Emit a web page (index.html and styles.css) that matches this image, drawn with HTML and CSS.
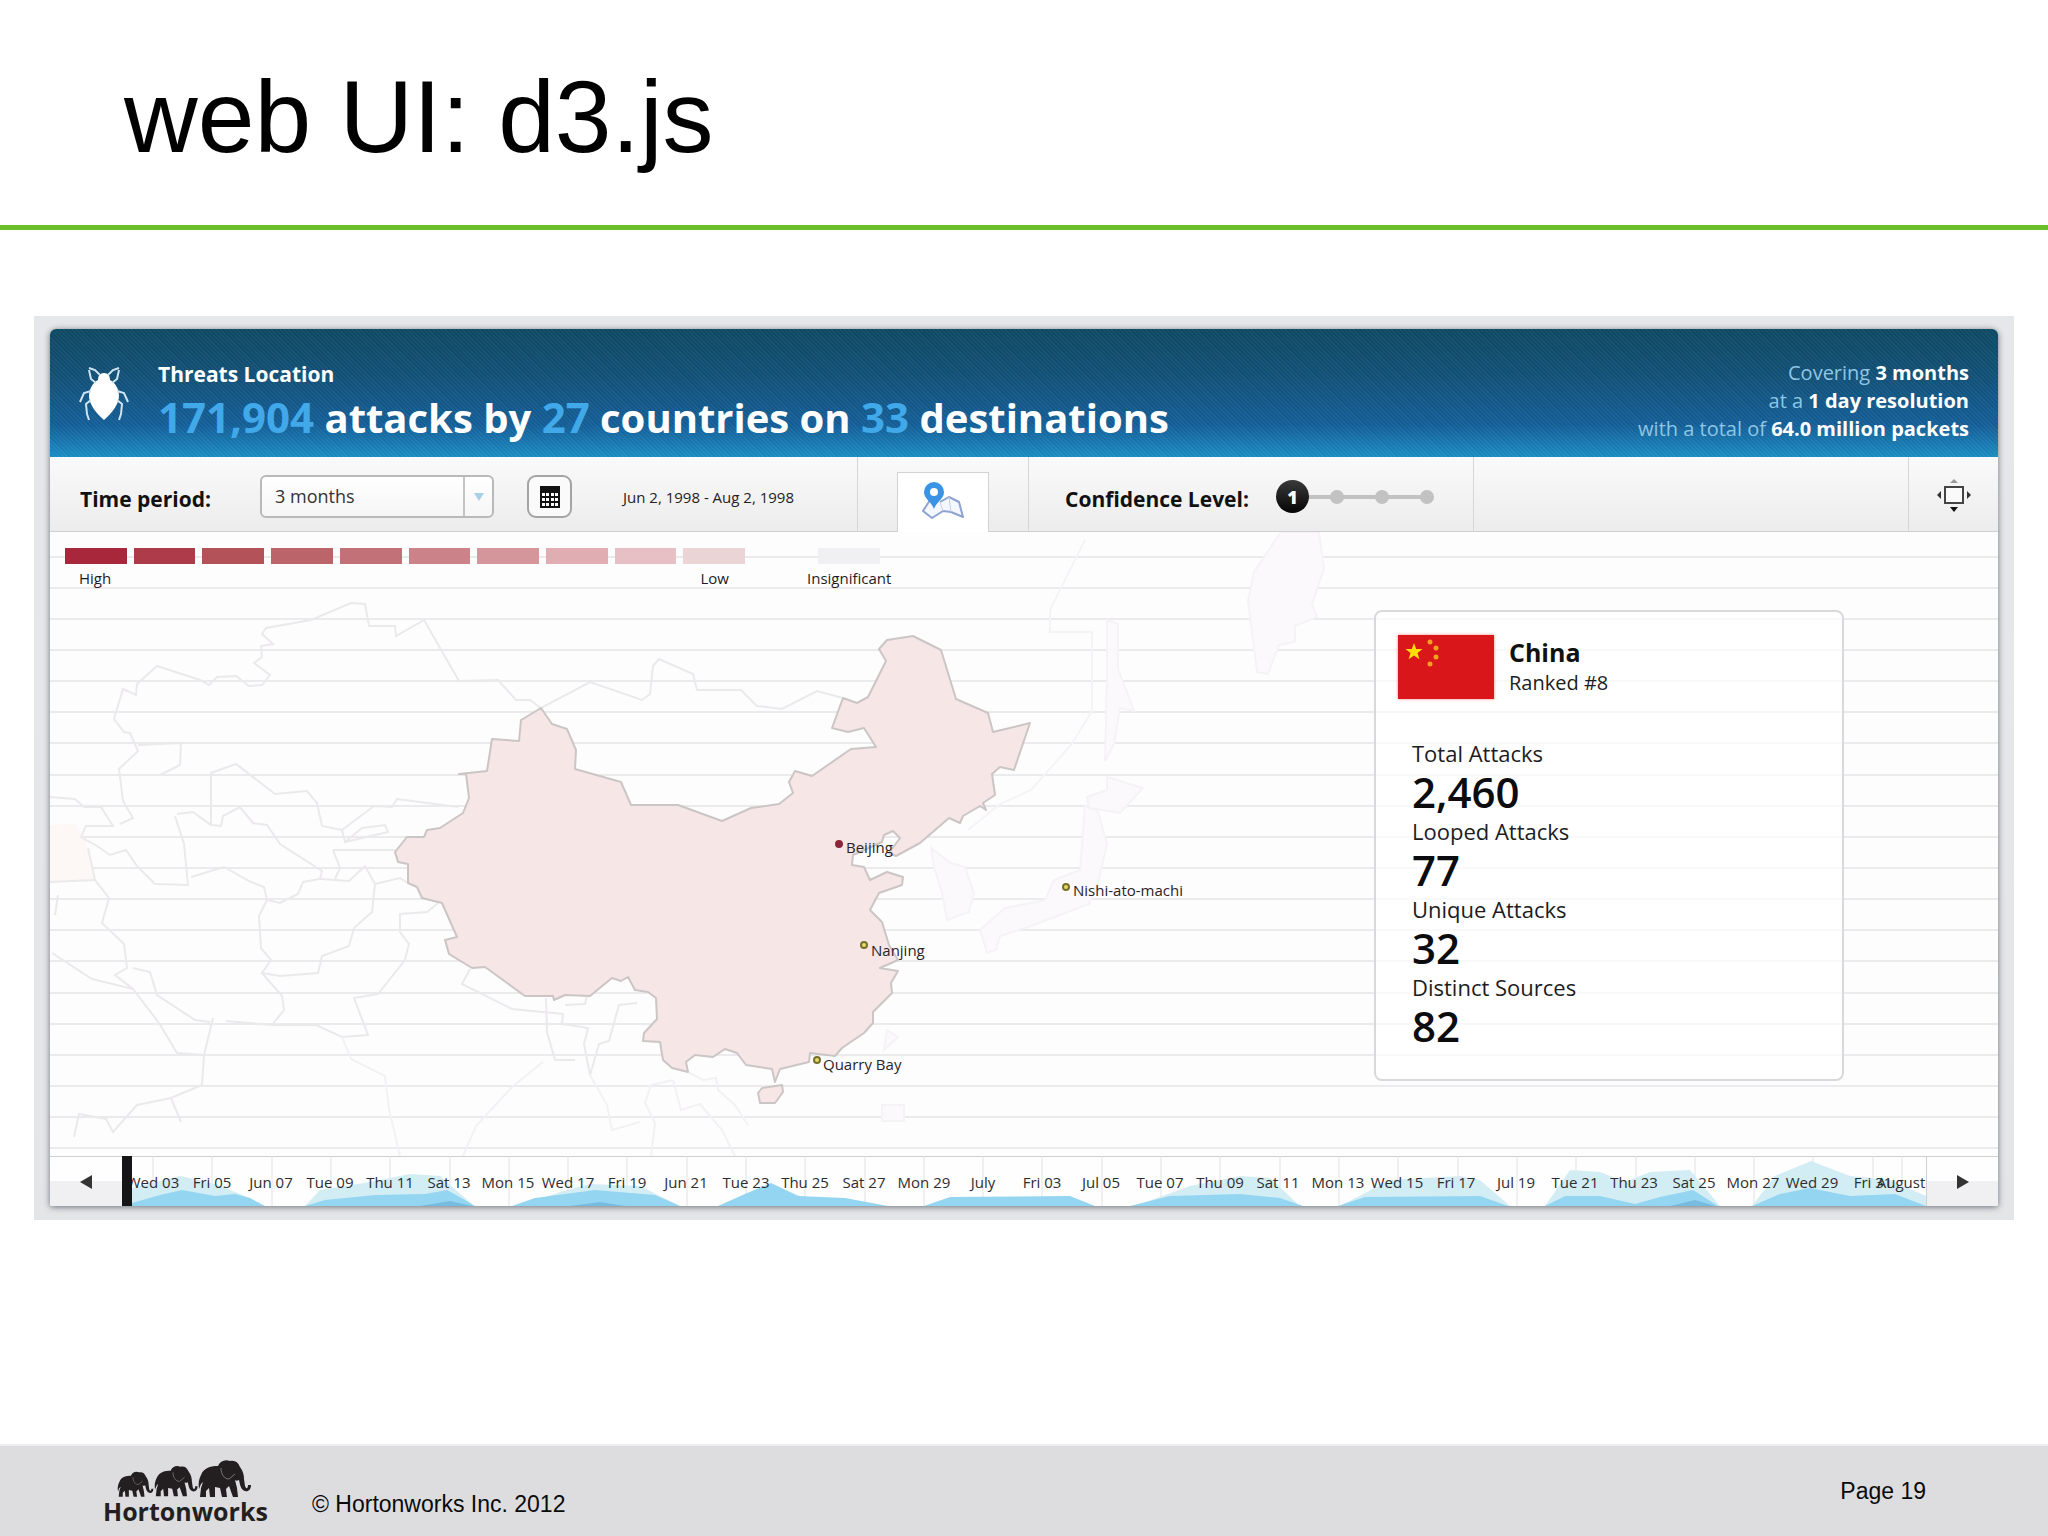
FILE: index.html
```html
<!DOCTYPE html>
<html lang="en">
<head>
<meta charset="utf-8">
<meta name="viewport" content="width=device-width, initial-scale=1">
<title>web UI: d3.js</title>
<link rel="stylesheet" href="styles.css">
</head>
<body>
<header class="slide-title">
  <h1>web UI: d3.js</h1>
</header>

<main class="stage">
  <section class="panel">
    <div class="banner">
      <svg class="bug" viewBox="0 0 50 56" aria-hidden="true">
        <path d="M25 7c4 0 6 3 6 7 6 3 9 10 9 16 0 8-7 17-15 24-8-7-15-16-15-24 0-6 3-13 9-16 0-4 2-7 6-7z" fill="#fff"/>
        <path d="M21 9 16 4 10 2M29 9l5-5 6-2M17 17l-5-4-2-9M33 17l5-4 2-9M12 25l-7 2-4 9M38 25l7 2 4 9M12 34l-5 4 1 10 2 6M38 34l5 4-1 10-2 6" fill="none" stroke="#cfe4f0" stroke-width="2"/>
      </svg>
      <div class="headline">
        <h2>Threats Location</h2>
        <p><em>171,904</em> attacks by <em>27</em> countries on <em>33</em> destinations</p>
      </div>
      <p class="coverage">Covering <b>3 months</b><br>at a <b>1 day resolution</b><br>with a total of <b>64.0 million packets</b></p>
    </div>

    <div class="toolbar">
      <div class="period">
        <label for="period">Time period:</label>
        <div class="select">
          <select id="period"><option>3 months</option></select>
          <span class="arrow"></span>
        </div>
        <button class="calendar" type="button" aria-label="Pick dates">
          <svg viewBox="0 0 20 22" width="20" height="22"><path d="M0 0h20v22H0z" fill="#111"/><path d="M2 7h3v3H2zM6 7h3v3H6zM11 7h3v3h-3zM15 7h3v3h-3zM2 12h3v3H2zM6 12h3v3H6zM11 12h3v3h-3zM15 12h3v3h-3zM2 17h3v3H2zM6 17h3v3H6zM11 17h3v3h-3zM15 17h3v3h-3z" fill="#fff"/></svg>
        </button>
        <span class="range">Jun 2, 1998 - Aug 2, 1998</span>
      </div>
      <div class="tabs">
        <button class="tab" type="button" aria-label="Map view">
          <svg viewBox="0 0 44 40" width="44" height="40">
            <path d="M9 19 2 30l9 7 11-7 8 1 12 5-4-15-10-5-9 5" fill="#f4f7fd" stroke="#8fa3d0" stroke-width="2" stroke-linejoin="round"/>
            <path d="m22 30-3-9M30 31l-2-15" stroke="#c3cfe8" stroke-width="1"/>
            <path d="M13 1a10 10 0 0 1 10 10c0 7-7 9-10 17C10 20 3 18 3 11A10 10 0 0 1 13 1z" fill="#3b93e6"/>
            <circle cx="13" cy="11" r="4" fill="#fff"/>
          </svg>
        </button>
      </div>
      <div class="confidence">
        <label for="confidence">Confidence Level:</label>
        <div class="slider">
          <svg viewBox="0 0 158 34" width="158" height="34" aria-hidden="true"><g fill="#c2c2c2"><path d="M16 15h135v4H16z"/><circle cx="61" cy="17" r="7"/><circle cx="106" cy="17" r="7"/><circle cx="151" cy="17" r="7"/></g></svg>
          <input id="confidence" type="range" min="1" max="4" value="1">
          <output for="confidence">1</output>
        </div>
      </div>
      <div class="spacer"></div>
      <button class="expand" type="button" aria-label="Full screen">
        <svg viewBox="0 0 36 34" width="36" height="34"><rect x="9" y="9" width="18" height="16" fill="#fafafa" stroke="#444" stroke-width="2"/><path d="M14 5h8l-4-4z" fill="#999"/><path d="m5 13-4 4 4 4zM31 13l4 4-4 4z" fill="#333"/><path d="M14 29h8l-4 5z" fill="#111"/></svg>
      </button>
    </div>

    <div class="map-area">
      <svg class="map" viewBox="50 532 1948 624" role="img" aria-label="Map of Asia">
        <path class="rules" d="M50 557h1948M50 588h1948M50 619h1948M50 650h1948M50 681h1948M50 712h1948M50 743h1948M50 775h1948M50 806h1948M50 837h1948M50 868h1948M50 899h1948M50 930h1948M50 961h1948M50 993h1948M50 1024h1948M50 1055h1948M50 1086h1948M50 1117h1948M50 1148h1948"/>
        <path d="M50 825 75 823 85 840 88 848 95 880 50 882z" fill="#fdf8f5"/>
        <g class="borders">
          <path d="M424 620 396 636 395 626 369 626 365 604 351 603 311 620 266 628 262 634 273 644 261 646 262 657 254 663 270 675 262 685 249 686 236 676 217 677 209 685 200 680 157 666 137 684 136 695 123 689 114 719 124 732 130 733 138 751 119 769 123 801 133 818 120 824"/>
          <path d="M138 745 181 743 180 765 160 775"/>
          <path d="M424 620 459 681 498 680 516 700 530 700 541 708 590 682 642 700 650 694 653 666 659 659 693 674 697 690 741 690 757 706 782 709 817 691 843 698"/>
          <path d="M211 825 211 773 236 764 275 794 307 791 317 803 322 826 342 830 374 806 392 807 397 799 458 807"/>
          <path d="M177 814 193 812 211 825 221 826 223 816 240 807 253 823 267 825 280 844 322 871 320 879 303 882 298 894 280 903 267 900 264 887 251 882 224 867 191 877"/>
          <path d="M342 830 345 842 362 828 385 825 388 832 345 842M333 850 398 850M333 850 340 868 335 879"/>
          <path d="M267 900 259 916 261 948 271 960 262 973 280 976 318 973 322 956 349 946 354 928 372 912 375 884 365 866 349 881 320 879M375 884 400 878 408 883"/>
          <path d="M262 973 282 996 284 1010 272 1025M226 1021 272 1025 316 1025 342 1037 368 1035 354 998 378 994 405 960 409 944 400 932 400 914 427 912 438 903"/>
          <path d="M88 848 95 880 109 898 102 923 124 944 127 968 115 975 133 989 159 1023 177 1053 204 1055 213 1018M204 1055 202 1085 171 1098 137 1105 113 1132 106 1119 79 1114 74 1137M171 1098 181 1122M52 953 92 979 133 989"/>
          <path d="M50 797 75 799 84 807 101 807 113 826 86 826 81 837 97 846 110 855 126 850 137 866 155 884 188 885 184 844 175 816"/>
          <path d="M50 882 95 880M58 895 55 915"/>
          <path d="M133 968 150 972 157 995 195 1020 210 1022"/>
          <path d="M470 969 462 984 512 1009 563 1014 562 1024 588 1028 584 1044 590 1075 599 1044 609 1041 619 1005 637 1003M546 998 547 1032 555 1060 575 1060M565 1005 585 1004 587 996"/>
        </g>
        <g class="borders faint">
          <path d="M342 1037 351 1059 385 1076 389 1109 400 1156M543 1062 512 1087 476 1126 463 1156"/>
          <path d="M673 1080 651 1085 645 1103 655 1123 651 1156M590 1075 607 1105 612 1130 640 1122M673 1080 681 1110 700 1104 722 1130 735 1156M688 1072 703 1080 716 1078 718 1090 735 1105 748 1125"/>
        </g>
        <g class="islands">
          <path d="M1281 532 1254 572 1248 601 1257 672 1268 674 1279 645 1295 642 1295 626 1317 617 1312 604 1324 569 1319 532z"/>
          <path d="M1107 620 1118 624 1118 669 1134 711 1120 708 1114 744 1105 761 1107 676z"/>
          <path d="M1107 777 1143 788 1120 813 1089 808 1087 797 1107 790z"/>
          <path d="M1085 806 1098 811 1107 844 1098 883 1089 904 1031 926 1000 936 996 950 987 953 980 930 1005 908 1045 900 1054 880 1080 870z"/>
          <path d="M931 848 951 863 965 867 974 893 969 912 947 920 942 893 934 867z"/>
          <path d="M887 1030 898 1037 884 1050zM882 1105h22v16h-22z"/>
          <path d="M1085 540 1050 610 1050 632 1092 632 1092 711 1071 745 1031 790 1000 804 968 830" fill="none"/>
        </g>
        <path class="china" d="M541 708 552 724 567 729 576 750 575 769 621 782 631 805 678 805 722 821 751 808 779 804 793 793 789 782 795 771 812 776 851 749 876 747 864 728 848 732 832 728 843 698 857 703 868 697 886 661 879 649 887 640 913 636 941 650 956 699 988 713 993 732 1030 723 1014 770 1000 767 992 774 995 795 983 803 986 810 980 806 963 816 960 823 949 818 920 843 896 856 889 853 900 838 893 831 884 835 882 842 853 855 852 865 864 867 870 880 887 872 903 877 902 885 879 893 870 910 882 922 889 945 898 960 880 968 898 971 891 983 892 993 873 1012 873 1023 864 1033 842 1048 835 1056 810 1053 809 1062 780 1069 775 1082 772 1069 746 1065 737 1053 725 1049 713 1057 695 1055 686 1062 688 1072 672 1068 663 1060 660 1042 643 1041 644 1033 657 1019 656 998 648 992 635 990 628 977 621 981 612 978 590 996 565 995 554 1000 553 996 525 996 485 967 472 968 449 954 445 940 457 937 442 903 422 898 417 887 408 883 408 864 398 862 395 852 407 837 424 837 427 830 440 828 463 813 469 798 466 774 459 774 487 771 492 739 519 741 521 720zM762 1088 782 1085 783 1092 775 1103 760 1103 758 1093z"/>
        <g class="cities">
          <circle class="hot" cx="839" cy="844" r="3"/><text x="846" y="853">Beijing</text>
          <circle cx="1066" cy="887" r="3"/><text x="1073" y="896">Nishi-ato-machi</text>
          <circle cx="864" cy="945" r="3"/><text x="871" y="956">Nanjing</text>
          <circle cx="817" cy="1060" r="3"/><text x="823" y="1070">Quarry Bay</text>
        </g>
      </svg>

      <div class="overlay">
        <div class="legend">
          <div class="scale">
            <div class="swatches"><i class="s1"></i><i class="s2"></i><i class="s3"></i><i class="s4"></i><i class="s5"></i><i class="s6"></i><i class="s7"></i><i class="s8"></i><i class="s9"></i><i class="s10"></i></div>
            <div class="ends"><span>High</span><span>Low</span></div>
          </div>
          <div class="none"><i></i><span>Insignificant</span></div>
        </div>

        <aside class="card">
          <div class="country">
            <svg class="flag" viewBox="0 0 96 64" aria-hidden="true"><path d="M0 0h96v64H0z" fill="#d9171b"/><path d="m16 8 2.200 6h6.300l-5 4 1.900 6.200-5.400-3.700-5.400 3.700 1.900-6.200-5-4h6.300z" fill="#ffde00"/><g fill="#f3a21c"><circle cx="32" cy="7" r="2.500"/><circle cx="38" cy="13" r="2.500"/><circle cx="38" cy="22" r="2.500"/><circle cx="32" cy="29" r="2.500"/></g></svg>
            <div><h3>China</h3><p>Ranked #8</p></div>
          </div>
          <dl>
            <dt>Total Attacks</dt><dd>2,460</dd>
            <dt>Looped Attacks</dt><dd>77</dd>
            <dt>Unique Attacks</dt><dd>32</dd>
            <dt>Distinct Sources</dt><dd>82</dd>
          </dl>
        </aside>
      </div>
    </div>

    <div class="timeline">
      <button type="button" class="prev" aria-label="Earlier"><svg viewBox="0 0 12 14" width="12" height="14"><path d="M12 0v14L0 7z"/></svg></button>
      <svg class="strip" viewBox="122 1156 1804 50" role="img" aria-label="Attacks per day">
        <path class="ticks" d="M153 1156v50M212 1156v50M272 1156v50M331 1156v50M390 1156v50M450 1156v50M509 1156v50M568 1156v50M627 1156v50M687 1156v50M746 1156v50M805 1156v50M865 1156v50M924 1156v50M983 1156v50M1042 1156v50M1102 1156v50M1161 1156v50M1220 1156v50M1280 1156v50M1339 1156v50M1398 1156v50M1458 1156v50M1517 1156v50M1576 1156v50M1636 1156v50M1695 1156v50M1754 1156v50M1813 1156v50M1873 1156v50M1902 1156v50"/>
        <path class="wave-light" d="M132 1206V1188L180 1176 215 1184 245 1196 262 1206zM305 1206 320 1190 370 1182 410 1174 440 1176 474 1206zM520 1206 560 1192 590 1184 640 1186 680 1206zM720 1206 755 1190 772 1184 800 1196 880 1206zM1135 1206 1190 1186 1240 1176 1270 1178 1300 1206zM1340 1206 1390 1180 1460 1176 1480 1180 1510 1206zM1545 1206 1570 1170 1600 1172 1625 1182 1650 1172 1690 1170 1720 1206zM1752 1206 1775 1176 1811 1161 1850 1176 1890 1180 1926 1196V1206z"/>
        <path class="wave" d="M132 1203 160 1195 182 1190 215 1196 235 1194 250 1198 265 1206H132zM305 1206 325 1200 345 1198 375 1195 425 1194 447 1190 465 1200 475 1206zM512 1206 535 1198 595 1190 655 1195 680 1206zM718 1206 745 1194 771 1183 798 1196 845 1198 888 1206zM924 1206 950 1197 1070 1196 1095 1206zM1130 1206 1170 1196 1240 1194 1280 1198 1303 1206zM1338 1206 1365 1197 1480 1196 1508 1206zM1545 1206 1565 1196 1600 1196 1635 1204 1660 1197 1693 1190 1718 1206zM1752 1206 1780 1194 1810 1188 1850 1196 1895 1194 1926 1206z"/>
        <path class="wave-dark" d="M420 1206 450 1201 472 1206zM570 1206 600 1202 625 1206zM1670 1206 1695 1200 1715 1206z"/>
        <g class="days">
          <text x="153" y="1188">Wed 03</text><text x="212" y="1188">Fri 05</text><text x="271" y="1188">Jun 07</text><text x="330" y="1188">Tue 09</text><text x="390" y="1188">Thu 11</text><text x="449" y="1188">Sat 13</text><text x="508" y="1188">Mon 15</text><text x="568" y="1188">Wed 17</text><text x="627" y="1188">Fri 19</text><text x="686" y="1188">Jun 21</text><text x="746" y="1188">Tue 23</text><text x="805" y="1188">Thu 25</text><text x="864" y="1188">Sat 27</text><text x="924" y="1188">Mon 29</text><text x="983" y="1188">July</text><text x="1042" y="1188">Fri 03</text><text x="1101" y="1188">Jul 05</text><text x="1160" y="1188">Tue 07</text><text x="1220" y="1188">Thu 09</text><text x="1278" y="1188">Sat 11</text><text x="1338" y="1188">Mon 13</text><text x="1397" y="1188">Wed 15</text><text x="1456" y="1188">Fri 17</text><text x="1516" y="1188">Jul 19</text><text x="1575" y="1188">Tue 21</text><text x="1634" y="1188">Thu 23</text><text x="1694" y="1188">Sat 25</text><text x="1753" y="1188">Mon 27</text><text x="1812" y="1188">Wed 29</text><text x="1873" y="1188">Fri 31</text><text x="1901" y="1188">August</text>
        </g>
        <path d="M122 1156h10v50h-10z" fill="#151518"/>
      </svg>
      <button type="button" class="next" aria-label="Later"><svg viewBox="0 0 12 14" width="12" height="14"><path d="M0 0v14l12-7z"/></svg></button>
    </div>
  </section>
</main>

<footer class="slide-footer">
  <div class="logo">
    <svg viewBox="0 0 136 40" width="136" height="40" aria-hidden="true">
      <defs>
        <g id="elephant">
          <path d="M2 16C5 8 13 7 19 7c2-5 7-7 12-5 5-1 8 1 10 6 3 4 4 8 4 12l1 7c1 3 3 3 3-1h3c0 5-3 7-6 6-4-1-5-6-6-11-2 1-3 1-4 0l2 8 1 9h-5l-4-11-3 3 1 8h-5l-2-9-5-1v10h-5l-1-9-3 3v6H1l1-9 2-6-2 2-2 5c-1-6 0-10 2-14z"/>
          <path d="M22 9c0 6 3 11 8 11l6-5" fill="none" stroke="#77777b" stroke-width="1"/>
        </g>
      </defs>
      <g fill="#231f20">
        <use href="#elephant" transform="translate(1 13) scale(.68)"/>
        <use href="#elephant" transform="translate(38 7) scale(.82)"/>
        <use href="#elephant" transform="translate(82 1)"/>
      </g>
    </svg>
    <strong>Hortonworks</strong>
  </div>
  <span class="copyright">© Hortonworks Inc. 2012</span>
  <span class="page-number">Page 19</span>
</footer>
</body>
</html>
```
FILE: styles.css
```css
* { box-sizing: border-box; }
body {
  margin: 0;
  min-height: 100vh;
  display: flex;
  flex-direction: column;
  background: #fff;
  color: #1c1c1e;
  font-family: "Open Sans", "Noto Sans", sans-serif;
}
h1, h2, h3, p, dl, dd { margin: 0; }
button { font: inherit; cursor: pointer; }

.slide-title {
  padding: 58px 124px 49px;
  border-bottom: 5px solid #6abf2b;
}
.slide-title h1 {
  font: 102px/118px "Liberation Sans", Arial, sans-serif;
  color: #000;
}

.stage {
  margin: 86px 34px 60px;
  padding: 13px 16px 14px;
  background: linear-gradient(#e6e7ea, #e3e5e7);
}
.panel {
  border-radius: 6px 6px 2px 2px;
  box-shadow: 0 1px 6px #6b7076;
  overflow: hidden;
  background: #fefefe;
}

.banner {
  display: flex;
  align-items: flex-start;
  height: 128px;
  padding: 30px 29px 0;
  color: #fff;
  background:
    repeating-linear-gradient(45deg, #ffffff0a 0 1px, #0000000a 2px 3px),
    linear-gradient(#0e4a64, #125178 35%, #14609a 75%, #1b8fc6);
}
.bug { width: 50px; height: 56px; margin-top: 7px; }
.headline { margin-left: 29px; }
.headline h2 { font-size: 21px; line-height: 30px; font-weight: 700; }
.headline p { font-size: 40px; line-height: 58px; font-weight: 700; }
.headline em { font-style: normal; font-size: 42px; line-height: 48px; color: #41a8ea; }
.coverage {
  margin-left: auto;
  text-align: right;
  font-size: 20px;
  line-height: 28px;
  color: #8fc6e3;
}
.coverage b { color: #fff; }

.toolbar {
  display: flex;
  height: 75px;
  background: linear-gradient(#fafafa, #ececed);
  box-shadow: inset 0 -1px #cfcfd1;
}
.toolbar label { padding-top: 4px; font-size: 21px; font-weight: 700; color: #111; }
.period {
  display: flex;
  align-items: center;
  width: 808px;
  padding: 4px 0 0 30px;
  border-right: 1px solid #d6d6d8;
}
.period label { width: 180px; }
.select {
  position: relative;
  width: 234px;
  height: 43px;
}
.select select {
  appearance: none;
  width: 100%;
  height: 100%;
  padding: 0 44px 2px 13px;
  border: 2px solid #b9b9bc;
  border-radius: 6px;
  background: linear-gradient(#fff, #f6f6f7);
  font: 18px/24px "Open Sans", sans-serif;
  color: #333;
}
.select .arrow {
  position: absolute;
  inset: 2px 2px 2px auto;
  width: 29px;
  border-left: 2px solid #c4c4c6;
  display: grid;
  place-items: center;
  pointer-events: none;
}
.select .arrow::after {
  content: "";
  border: 5px solid transparent;
  border-top: 8px solid #a9cfe9;
  border-bottom: 0;
}
.calendar {
  display: grid;
  place-items: center;
  width: 45px;
  height: 43px;
  margin-left: 33px;
  padding: 0;
  border: 2px solid #a4a4a7;
  border-radius: 9px;
  background: #fafafa;
}
.range { margin-left: 51px; font-size: 15px; color: #222; white-space: nowrap; }
.tabs {
  display: flex;
  justify-content: center;
  align-items: flex-end;
  width: 171px;
  border-right: 1px solid #d6d6d8;
}
.tab {
  width: 92px;
  height: 60px;
  padding: 2px 0 0;
  border: 1px solid #d2d2d4;
  border-bottom: 0;
  background: #fff;
}
.confidence {
  display: flex;
  align-items: center;
  width: 445px;
  padding: 4px 0 0 36px;
  border-right: 1px solid #d6d6d8;
}
.confidence label { width: 211px; }
.slider { position: relative; width: 158px; height: 34px; }
.slider svg { display: block; }
.slider input {
  position: absolute;
  inset: 0;
  width: 158px;
  height: 34px;
  margin: 0;
  appearance: none;
  background: none;
}
.slider input::-webkit-slider-thumb {
  appearance: none;
  width: 33px;
  height: 33px;
  border-radius: 50%;
  background: linear-gradient(#3a3a3a, #050505);
}
.slider output {
  position: absolute;
  left: 0;
  top: 0;
  width: 33px;
  font-size: 18px;
  line-height: 34px;
  font-weight: 800;
  text-align: center;
  color: #fff;
  pointer-events: none;
}
.spacer { flex: 1; }
.expand {
  width: 90px;
  padding: 6px 0 0;
  border: 0;
  border-left: 1px solid #d6d6d8;
  background: none;
}

.map-area { display: grid; }
.map { grid-area: 1 / 1; display: block; width: 100%; background: #fefdfe; }
.rules { stroke: #ebeaec; stroke-width: 2; }
.borders { fill: none; stroke: #ebe9ec; stroke-width: 2; }
.faint { stroke: #f3f1f4; }
.islands { fill: #fbf9fb; stroke: #f5f3f6; stroke-width: 2; }
.china { fill: #f6e6e6; stroke: #cbc6c5; stroke-width: 2; stroke-linejoin: round; }
.cities text { font-size: 15px; fill: #2b2226; }
.cities circle { fill: #e4dc6a; stroke: #77702a; stroke-width: 2; }
.cities .hot { fill: #8c2638; stroke: #8c2638; }

.overlay {
  grid-area: 1 / 1;
  display: flex;
  justify-content: space-between;
  align-items: flex-start;
  padding: 16px 154px 0 15px;
}
.legend { display: flex; gap: 62px; font-size: 15px; line-height: 20px; }
.scale { width: 680px; }
.swatches { display: grid; grid-template-columns: repeat(10, 1fr); gap: 7px; }
.swatches i, .none i { height: 16px; }
.ends { display: flex; justify-content: space-between; padding: 4px 16px 0 14px; }
.none { display: grid; justify-items: center; gap: 4px; }
.none i { width: 62px; background: #f0eff1; }
.s1 { background: #a9273a; }
.s2 { background: #ae3b4a; }
.s3 { background: #b45259; }
.s4 { background: #bb656b; }
.s5 { background: #c27179; }
.s6 { background: #cb8389; }
.s7 { background: #d4969b; }
.s8 { background: #dfadb2; }
.s9 { background: #e6c0c4; }
.s10 { background: #ebd4d6; }

.card {
  width: 470px;
  margin-top: 62px;
  padding: 23px 22px 29px;
  border: 2px solid #d9d8db;
  border-radius: 8px;
  background: #ffffffb0;
}
.country { display: flex; align-items: center; gap: 15px; }
.flag { width: 96px; height: 64px; box-shadow: 0 0 3px #e88; }
.country h3 { font-size: 25px; line-height: 32px; color: #111; }
.country p { font-size: 20px; line-height: 30px; }
.card dl { margin: 39px 0 0 14px; }
.card dt { font-size: 22px; line-height: 30px; }
.card dd { font-size: 42px; line-height: 48px; font-weight: 600; color: #0c0c0e; }

.timeline { display: flex; align-items: stretch; box-shadow: inset 0 1px #d0d0d2; }
.timeline button {
  flex: 0 0 72px;
  padding: 4px 0 0;
  border: 0;
  background: linear-gradient(transparent 50%, #f0f0f2 50%);
  fill: #333;
}
.timeline .next { border-left: 1px solid #d0d0d2; }
.strip { flex: 1; min-width: 0; display: block; }
.ticks { stroke: #e2e2e5; stroke-width: 1; }
.wave-light { fill: #d3edf5; }
.wave { fill: #94d6f1; }
.wave-dark { fill: #78bbe0; }
.days text { font-size: 15px; text-anchor: middle; fill: #2d2d31; }

.slide-footer {
  display: flex;
  align-items: flex-start;
  margin-top: auto;
  height: 92px;
  padding: 0 122px 0 103px;
  border-top: 2px solid #eeeef0;
  background: #dddde0;
  color: #0a0a0a;
  font: 23px/28px "Liberation Sans", Arial, sans-serif;
}
.logo { display: grid; justify-items: center; width: 163px; padding-top: 12px; color: #231f20; }
.logo strong { font: 700 25px/26px "Open Sans", sans-serif; }
.copyright { margin: 44px 0 0 46px; }
.page-number { margin: 31px 0 0 auto; }
```
